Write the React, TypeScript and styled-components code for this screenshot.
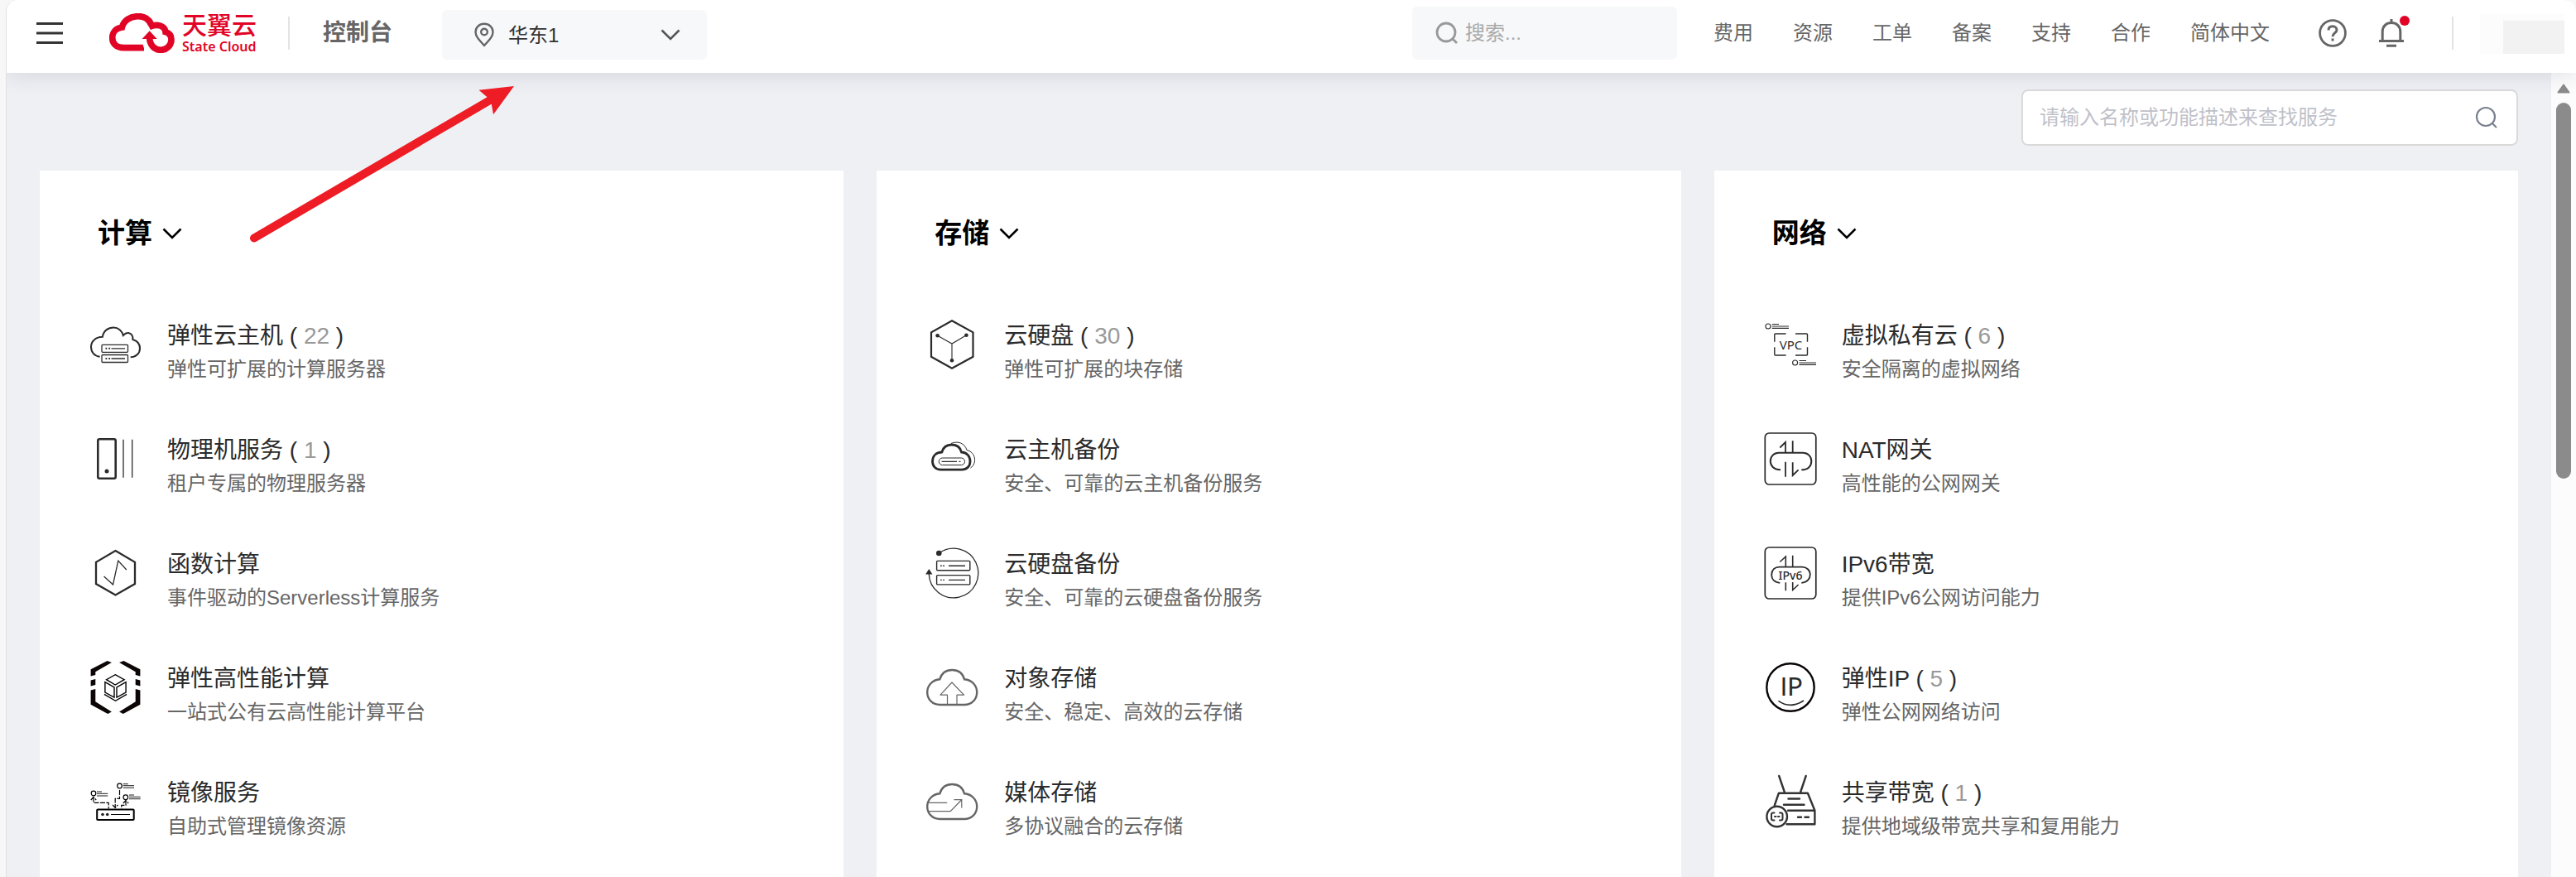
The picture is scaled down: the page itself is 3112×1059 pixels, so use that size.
import React from 'react';
import styled, { createGlobalStyle } from 'styled-components';

const GlobalStyle = createGlobalStyle`
  * { box-sizing: border-box; }
  body {
    margin: 0;
    background: #f7f7f7;
    color: #2b2b2b;
    font-family: "Liberation Sans", "Noto Sans CJK SC", sans-serif;
    font-size: 24px;
  }
  button, input, select { font: inherit; color: inherit; }
  a { color: inherit; text-decoration: none; }
`;

const Frame = styled.div`
  position: relative;
  display: flex;
  flex-direction: column;
  min-height: 100vh;
  margin-left: 7px;
  border-left: 1px solid #dedfe2;
  border-radius: 14px 14px 0 0;
  background: #eff0f4;
  overflow: hidden;
`;

const Header = styled.header`
  position: relative;
  z-index: 1;
  display: flex;
  align-items: center;
  height: 88px;
  padding: 0 14px 8px 36px;
  background: #fff;
  color: #666;
  box-shadow: 0 4px 24px rgba(30, 45, 80, 0.12);
`;

const IconButton = styled.button`
  display: flex;
  position: relative;
  padding: 0;
  border: 0;
  background: none;
  cursor: pointer;
`;

const Logo = styled.a`
  display: flex;
  align-items: center;
  gap: 8px;
  margin-left: 56px;
  color: #e10426;
`;

const LogoText = styled.span`
  display: flex;
  flex-direction: column;
  width: 90px;
  white-space: nowrap;
`;

const LogoName = styled.span`
  font-size: 30px;
  font-weight: 500;
  line-height: 32px;
`;

const LogoSub = styled.span`
  font-family: "Noto Sans", sans-serif;
  font-size: 16px;
  font-weight: 600;
  line-height: 18px;
`;

const Divider = styled.span<{ $gap?: number }>`
  width: 2px;
  height: 40px;
  margin-left: ${({ $gap = 0 }) => $gap}px;
  background: #e3e3e5;
`;

const ConsoleLink = styled.a`
  margin-left: 40px;
  font-size: 28px;
  font-weight: 700;
  line-height: 40px;
`;

const HeaderBox = styled.label`
  display: flex;
  align-items: center;
  width: 320px;
  height: 64px;
  border-radius: 6px;
  background: #f7f8fa;
`;

const RegionBox = styled(HeaderBox)`
  height: 60px;
  margin: 4px 0 0 60px;
  padding: 0 32px 0 38px;
`;

const RegionSelect = styled.select`
  flex: 1;
  min-width: 0;
  height: 40px;
  margin: 0 16px;
  padding: 0;
  border: 0;
  outline: 0;
  appearance: none;
  background: none;
  color: #333;
`;

const QuickSearch = styled(HeaderBox)`
  margin-left: auto;
  padding: 0 28px;
  gap: 8px;
`;

const PlainInput = styled.input`
  flex: 1;
  min-width: 0;
  height: 40px;
  padding: 0;
  border: 0;
  outline: 0;
  background: none;
  &::placeholder { color: #a9a9a9; opacity: 1; }
`;

const Nav = styled.nav`
  display: flex;
  gap: 48px;
  margin: 0 58px 0 44px;
  line-height: 40px;
  white-space: nowrap;
`;

const Tools = styled.div`
  display: flex;
  align-items: center;
  gap: 38px;
  margin-right: 58px;
`;

const Dot = styled.span`
  position: absolute;
  top: -4px;
  right: -7px;
  width: 12px;
  height: 12px;
  border-radius: 50%;
  background: #e10426;
`;

const Account = styled.div`
  display: flex;
  align-items: flex-end;
  justify-content: flex-end;
  width: 102px;
  height: 49px;
  margin-left: 32px;
  background: #fcfcfc;
`;

const AccountName = styled.span`
  width: 74px;
  height: 40px;
  background: #f2f2f2;
`;

const Body = styled.div`
  flex: 1;
  display: flex;
`;

const Main = styled.main`
  flex: 1;
  display: flex;
  flex-direction: column;
  padding: 20px 40px 0;
`;

const ServiceSearch = styled.label`
  display: flex;
  align-items: center;
  align-self: flex-end;
  width: 600px;
  height: 68px;
  margin-bottom: 30px;
  padding: 0 22px 0 20px;
  border: 2px solid #dadada;
  border-radius: 8px;
  background: #fff;
  input::placeholder { color: #bfc1c9; }
`;

const Columns = styled.div`
  flex: 1;
  display: grid;
  grid-template-columns: repeat(3, 1fr);
  gap: 40px;
`;

const Card = styled.section`
  padding: 52px 60px 40px;
  background: #fff;
`;

const CardTitle = styled.h2`
  margin: 0 0 78px;
  font-size: 33px;
  line-height: 48px;
`;

const TitleToggle = styled.button`
  display: flex;
  align-items: center;
  gap: 12px;
  padding: 0 10px;
  border: 0;
  background: none;
  color: #000;
  cursor: pointer;
`;

const Services = styled.ul`
  display: flex;
  flex-direction: column;
  gap: 58px;
  margin: 0;
  padding: 0;
  list-style: none;
`;

const Service = styled.a`
  display: flex;
  align-items: flex-start;
  gap: 30px;
  height: 80px;
`;

const ServiceIcon = styled.svg`
  flex: none;
  width: 64px;
  height: 64px;
  overflow: visible;
  fill: none;
  stroke: currentColor;
  stroke-width: 2;
  text { stroke: none; fill: currentColor; font-family: "Noto Sans", sans-serif; text-anchor: middle; }
`;

const ServiceText = styled.span`
  display: flex;
  flex-direction: column;
  padding-top: 2px;
  line-height: 40px;
  white-space: nowrap;
`;

const ServiceName = styled.span`
  font-size: 28px;
`;

const Count = styled.span`
  color: #999;
`;

const ServiceDesc = styled.span`
  color: #666;
`;

const ScrollTrack = styled.div`
  display: flex;
  flex-direction: column;
  align-items: center;
  gap: 11px;
  width: 30px;
  padding-top: 13px;
  background: #fcfcfc;
`;

const ScrollThumb = styled.div`
  width: 18px;
  height: 454px;
  border-radius: 9px;
  background: #8b8b8b;
`;

const Annotation = styled.svg`
  position: absolute;
  z-index: 2;
  top: 0;
  left: 0;
  pointer-events: none;
`;

const Chevron = ({ color }: { color: string }) => (
  <svg width="24" height="14" viewBox="0 0 24 14" fill="none" stroke={color} strokeWidth="2.6">
    <path d="M1.5 1.5 12 12 22.5 1.5" />
  </svg>
);

const Magnifier = ({ color, stroke }: { color: string; stroke: number }) => (
  <svg width="28" height="28" viewBox="0 0 28 28" fill="none" stroke={color} strokeWidth={stroke}>
    <circle cx="13" cy="13" r="11" />
    <path d="m20.5 20.5 5.5 5.5" />
  </svg>
);

const CloudLogo = () => (
  <svg width="80" height="48" viewBox="36 36 240 144" fill="none" stroke="currentColor" strokeWidth="23">
    <path d="M162 161H88C62 161 47 146 47 124 47 104 61 90 82 87 88 62 112 47 142 47 163 47 179 58 187 74" />
    <path d="M180 86C206 72 238 80 240 104 254 108 261 118 261 132 261 154 243 169 223 169 200 169 183 152 182 125" />
    <path d="M182 100 209 129H155Z" fill="currentColor" stroke="none" />
    <path d="M160 148C163 160 168 171 178 182" stroke="#fff" strokeWidth="6" />
  </svg>
);

const cloudPath =
  'M16.5 53C7.5 53 1.2 46.5 1.2 38 1.2 29.5 7.5 23 16.3 22.3 18.5 15 24 11 31.2 11 38.4 11 44 15 46 22.3 55 23 61.2 29.5 61.2 38 61.2 46.5 55 53 46 53Z';

const icons: Record<string, React.ReactNode> = {
  ecs: (
    <>
      <path d="M12.6 46.7C6 46 2 41 2 35 2 28 8 22.7 15.9 22.7 17 15.5 22.5 11.5 29.2 11.5 35 11.5 39.5 15.5 40.8 21 43 18.5 45 17.8 47 18 51 18.5 53 22 52.4 26 58 27.5 61 31.5 61 36.7 61 43 56 47.3 49.7 47.3" />
      <g strokeWidth="1.3">
        <rect x="15" y="32.3" width="31.5" height="9" rx="1" />
        <rect x="15" y="44.5" width="31.5" height="9" rx="1" />
        <path d="M26.5 36.8H43M26.5 49H43" />
        <path d="M19.5 36.8h1.8m2 0h1.8M19.5 49h1.8m2 0h1.8" strokeWidth="2" />
      </g>
    </>
  ),
  bms: (
    <>
      <rect x="10.3" y="8.3" width="21.4" height="47.4" rx="2" strokeWidth="2.6" />
      <circle cx="21" cy="47" r="2.5" fill="currentColor" stroke="none" />
      <path d="M41 8.7v46M51.7 8.7v46" strokeWidth="1.3" />
    </>
  ),
  fn: (
    <>
      <path d="M31.5 5 55 18.8V45L31.5 58.5 8 45V18.8Z" strokeWidth="2.3" />
      <path d="M17.6 36 28.5 46 34.8 17 44.8 28" strokeWidth="1.3" />
    </>
  ),
  hpc: (
    <>
      {['', 'translate(63 0) scale(-1 1)'].map((t) => (
        <g key={t} transform={t || undefined} fill="#0c0606" stroke="none">
          <path d="M21.6 0 26.9 2 7.3 13.3V17L1.6 18.5V10.3ZM1.6 23.5 7.3 22V29L1.6 30.5ZM1.6 35.5 7.3 34V49.3L26.9 61.5 22.2 64 1.6 52.7Z" />
        </g>
      ))}
      <path
        d="M31.2 16.7 42.1 22.7 31.2 29 20.6 22.7ZM18.9 25.7 30 32V44L18.9 38ZM44.1 25.7 33 32V44L44.1 38ZM17.9 40.3 31.5 48.3 45.1 40.3"
        strokeWidth="1.4"
        stroke="#000"
      />
    </>
  ),
  ims: (
    <g stroke="#000">
      <rect x="9.2" y="41.5" width="44.5" height="12.5" rx="1" />
      <g fill="#222" stroke="none">
        <circle cx="16" cy="47.5" r="1.8" />
        <circle cx="21.7" cy="47.5" r="1.8" />
      </g>
      <path d="M26 47.5H49" strokeWidth="1" />
      <g strokeWidth="1.2">
        <circle cx="5" cy="22" r="2.8" />
        <circle cx="36.5" cy="13" r="2.8" />
        <circle cx="43.8" cy="26.7" r="2.8" />
        <path d="M9 20h6M9 22.3h13.2M9 25h13.2M40.8 10.7h6M40.8 12.7H54M40.8 15.2H54M48 24h6M48 26.3h13.7M48 28.7h13.7" strokeWidth="0.9" />
        <path d="M1.8 30 5 26.5 8.2 30M5 26.5V33.3H23.2V40.5M40.8 34 44 30.5 47.2 34M44 30.5V36.3H38.8V40.5M36.5 18V28.3H31.2V39M28 36 31.2 39.3 34.4 36" strokeDasharray="6 1.4" />
      </g>
    </g>
  ),
  evs: (
    <>
      <path d="M31 3.2 56.5 17.4V46.8L31 60.8 6 46.8V17.4Z" strokeWidth="2.2" />
      <path d="M13.6 21.3 31 31 48.4 20.7M31 31V51" strokeWidth="1.1" />
      <g fill="currentColor" stroke="none">
        <circle cx="13.6" cy="21.3" r="2.3" />
        <circle cx="48.4" cy="20.7" r="2.3" />
        <circle cx="31" cy="51.3" r="2.3" />
      </g>
    </>
  ),
  csbs: (
    <>
      <path d="M17.5 45.2C11 45.2 7.5 40.5 7.5 35 7.5 28.5 12 24.3 18.8 24 20.5 18 25 15 30.8 15 36.5 15 41 18 42.5 24 49 24.3 53 29 53 35 53 41 49 45.2 43 45.2Z" strokeWidth="2.8" />
      <path d="M30 13.5C38 10 46.5 13 49 21.5 59.5 24 62 37 53.4 43.2" strokeWidth="1" />
      <rect x="15.3" y="31" width="31.2" height="8.5" rx="4.2" strokeWidth="1" />
      <path d="M18.6 35.3H37M39.5 35.3h2" strokeWidth="1.2" />
    </>
  ),
  vbs: (
    <>
      <path d="M15.3 8A29.8 29.8 0 1 1 3.2 32.5" strokeWidth="1.3" />
      <circle cx="15.3" cy="8" r="3.3" fill="currentColor" stroke="none" />
      <path d="M3.3 27 7.4 33.5H-.8Z" fill="currentColor" stroke="none" />
      <g strokeWidth="1.4">
        <rect x="12.6" y="17.4" width="40.2" height="11.3" rx="1" />
        <rect x="12.6" y="34.6" width="40.2" height="11.3" rx="1" />
        <path d="M27 23.2H47M27 40.4H47M17 23.2h1.8m1.4 0H22M17 40.4h1.8m1.4 0H22" />
      </g>
    </>
  ),
  oss: (
    <g stroke="#666">
      <path d={cloudPath} strokeWidth="2.4" />
      <path d="M25.5 53V41.2H17L31 26 45.5 41.2H37V53" strokeWidth="1.2" strokeLinejoin="round" />
    </g>
  ),
  media: (
    <g stroke="#666">
      <path d={cloudPath} strokeWidth="2.4" />
      <path d="M2 33.3H25.2M3 43.7H29.2L42.5 30M33.5 29.7H42.8V39.5" strokeWidth="1.2" />
    </g>
  ),
  vpc: (
    <>
      <path d="M12.8 28.8V20q0-1 1-1H26.6M38 19H51.5q1 0 1 1V28.8M52.5 35.3V44q0 1-1 1H38M26.6 45H13.8q-1 0-1-1V35.3" strokeWidth="1.4" />
      <text x="32.5" y="38" fontSize="15">VPC</text>
      <g strokeWidth="1.1">
        <circle cx="5" cy="10" r="3" />
        <circle cx="37.6" cy="54" r="3" />
        <path d="M9.7 7.5H18M9.7 10H30M9.7 12.4H30M42.5 51.5H51M42.5 54H63M42.5 56.4H63" />
      </g>
    </>
  ),
  nat: (
    <>
      <rect x="1.3" y="1" width="61.5" height="62" rx="5" strokeWidth="1.7" />
      <path d="M20 45.3C11.5 45.3 7.8 40 7.8 35 7.8 29 12 24.8 18 24.8H47C53 24.8 57.3 29 57.3 35 57.3 41 53 45.3 45.3 45.3" />
      <path d="M19.3 18.5 26 12V25M34.7 10.3V25M26 35.7V53.7M34.7 36.3V52L41.6 45.3" strokeWidth="1.8" />
    </>
  ),
  ipv6: (
    <>
      <rect x="1.3" y="1" width="61.5" height="62" rx="5" strokeWidth="1.7" />
      <path d="M19.3 43.8C12 43.3 9.2 38.5 9.2 34 9.2 28.5 13 24.6 18.5 24.6H46C51.5 24.6 55.8 28.5 55.8 34 55.8 38.5 52.5 43.3 45.3 43.8" strokeWidth="1.8" />
      <path d="M19.3 18.5 26.3 12V24.6M34.7 10.7V24.6M26.3 43.3V53.3M34.7 43V52.5L41.6 46" strokeWidth="1.6" />
      <text x="32" y="39.7" fontSize="14" fontWeight="500">IPv6</text>
    </>
  ),
  eip: (
    <>
      <circle cx="32" cy="32" r="28.7" stroke="#0a0506" strokeWidth="2.4" />
      <text x="33" y="42" fontSize="30" style={{ fontFamily: 'Lato, sans-serif' }}>IP</text>
      <path d="M17.5 48.3Q32 58.5 48 48" strokeWidth="1.6" />
    </>
  ),
  sbw: (
    <g stroke="#333" strokeWidth="2.4" strokeLinecap="round" strokeLinejoin="round">
      <path d="M18.2 1 24.7 20M50.7 1 44.3 20M12.8 36.5 17.9 21.7H52.9L61.4 42.7V59.3H27.5M29 42.7H61.4" />
      <path d="M29.5 28.5H43M24 35.7H48.5M41 50.7h4M49.5 50.7h4.5" />
      <circle cx="15.7" cy="50" r="12.3" />
      <path d="M12.5 45.5H11q-2 0-2 2v5q0 2 2 2h1.5M19 45.5h1.5q2 0 2 2v5q0 2-2 2H19M13 50h1.5m2.5 0h1.5" strokeWidth="2" />
    </g>
  ),
};

type Item = { icon: string; name: string; desc: string; count?: number };

const categories: { title: string; items: Item[] }[] = [
  {
    title: '计算',
    items: [
      { icon: 'ecs', name: '弹性云主机', count: 22, desc: '弹性可扩展的计算服务器' },
      { icon: 'bms', name: '物理机服务', count: 1, desc: '租户专属的物理服务器' },
      { icon: 'fn', name: '函数计算', desc: '事件驱动的Serverless计算服务' },
      { icon: 'hpc', name: '弹性高性能计算', desc: '一站式公有云高性能计算平台' },
      { icon: 'ims', name: '镜像服务', desc: '自助式管理镜像资源' },
    ],
  },
  {
    title: '存储',
    items: [
      { icon: 'evs', name: '云硬盘', count: 30, desc: '弹性可扩展的块存储' },
      { icon: 'csbs', name: '云主机备份', desc: '安全、可靠的云主机备份服务' },
      { icon: 'vbs', name: '云硬盘备份', desc: '安全、可靠的云硬盘备份服务' },
      { icon: 'oss', name: '对象存储', desc: '安全、稳定、高效的云存储' },
      { icon: 'media', name: '媒体存储', desc: '多协议融合的云存储' },
    ],
  },
  {
    title: '网络',
    items: [
      { icon: 'vpc', name: '虚拟私有云', count: 6, desc: '安全隔离的虚拟网络' },
      { icon: 'nat', name: 'NAT网关', desc: '高性能的公网网关' },
      { icon: 'ipv6', name: 'IPv6带宽', desc: '提供IPv6公网访问能力' },
      { icon: 'eip', name: '弹性IP', count: 5, desc: '弹性公网网络访问' },
      { icon: 'sbw', name: '共享带宽', count: 1, desc: '提供地域级带宽共享和复用能力' },
    ],
  },
];

const navLinks = ['费用', '资源', '工单', '备案', '支持', '合作', '简体中文'];

export default function App() {
  return (
    <>
      <GlobalStyle />
      <Frame>
        <Header>
          <IconButton aria-label="菜单">
            <svg width="32" height="28" viewBox="0 0 32 28" stroke="#333" strokeWidth="3">
              <path d="M0 2.5H32M0 14H32M0 25.5H32" />
            </svg>
          </IconButton>
          <Logo href="#">
            <CloudLogo />
            <LogoText>
              <LogoName>天翼云</LogoName>
              <LogoSub>State Cloud</LogoSub>
            </LogoText>
          </Logo>
          <Divider $gap={38} />
          <ConsoleLink href="#">控制台</ConsoleLink>
          <RegionBox>
            <svg width="26" height="30" viewBox="0 0 26 30" fill="none" stroke="#666" strokeWidth="2.4">
              <path d="M13 28C7 21.5 2.5 17 2.5 11.8 2.5 6 7 1.8 13 1.8S23.5 6 23.5 11.8C23.5 17 19 21.5 13 28Z" />
              <circle cx="13" cy="11.5" r="3.8" />
            </svg>
            <RegionSelect aria-label="区域" defaultValue="华东1">
              <option>华东1</option>
            </RegionSelect>
            <Chevron color="#555" />
          </RegionBox>
          <QuickSearch>
            <Magnifier color="#999" stroke={2.8} />
            <PlainInput aria-label="搜索" placeholder="搜索..." />
          </QuickSearch>
          <Nav>
            {navLinks.map((label) => (
              <a key={label} href="#">{label}</a>
            ))}
          </Nav>
          <Tools>
            <IconButton aria-label="帮助">
              <svg width="36" height="36" viewBox="0 0 36 36" fill="none" stroke="#666" strokeWidth="2.8">
                <circle cx="18" cy="18" r="15.4" />
                <path d="M13 14.5C13 11.5 15 9.8 18 9.8S23 11.6 23 14.2C23 17.6 18 18 18 22.3M18 24.5V27.5" strokeWidth="3" />
              </svg>
            </IconButton>
            <IconButton aria-label="消息">
              <svg width="30" height="34" viewBox="0 0 30 34" fill="none" stroke="#666" strokeWidth="3">
                <path d="M0 26.5H30M4.2 26V15.5C4.2 8.5 9 4.6 15 4.6S25.8 8.5 25.8 15.5V26M15 0V4M9 32.3H21" />
              </svg>
              <Dot />
            </IconButton>
          </Tools>
          <Divider />
          <Account>
            <AccountName />
          </Account>
        </Header>
        <Body>
          <Main>
            <ServiceSearch>
              <PlainInput aria-label="查找服务" placeholder="请输入名称或功能描述来查找服务" />
              <Magnifier color="#7b828f" stroke={2.2} />
            </ServiceSearch>
            <Columns>
              {categories.map((category) => (
                <Card key={category.title}>
                  <CardTitle>
                    <TitleToggle>
                      {category.title}
                      <Chevron color="#000" />
                    </TitleToggle>
                  </CardTitle>
                  <Services>
                    {category.items.map((item) => (
                      <li key={item.name}>
                        <Service href="#">
                          <ServiceIcon viewBox="0 0 64 64">{icons[item.icon]}</ServiceIcon>
                          <ServiceText>
                            <ServiceName>
                              {item.name}
                              {item.count !== undefined && (
                                <> ( <Count>{item.count}</Count> )</>
                              )}
                            </ServiceName>
                            <ServiceDesc>{item.desc}</ServiceDesc>
                          </ServiceText>
                        </Service>
                      </li>
                    ))}
                  </Services>
                </Card>
              ))}
            </Columns>
          </Main>
          <ScrollTrack>
            <svg width="16" height="12" viewBox="0 0 16 12" fill="#8b8b8b" stroke="#8b8b8b" strokeWidth="2" strokeLinejoin="round">
              <path d="M8 1.5 14.5 10.5H1.5Z" />
            </svg>
            <ScrollThumb />
          </ScrollTrack>
        </Body>
        <Annotation width="640" height="300" viewBox="8 0 640 300">
          <path d="M307 287.5 597 118" stroke="#ee1c25" strokeWidth="10" strokeLinecap="round" />
          <path d="M621 104 578.5 108.7 588.5 117.3 593.8 126 596 138.3Z" fill="#ee1c25" />
        </Annotation>
      </Frame>
    </>
  );
}
